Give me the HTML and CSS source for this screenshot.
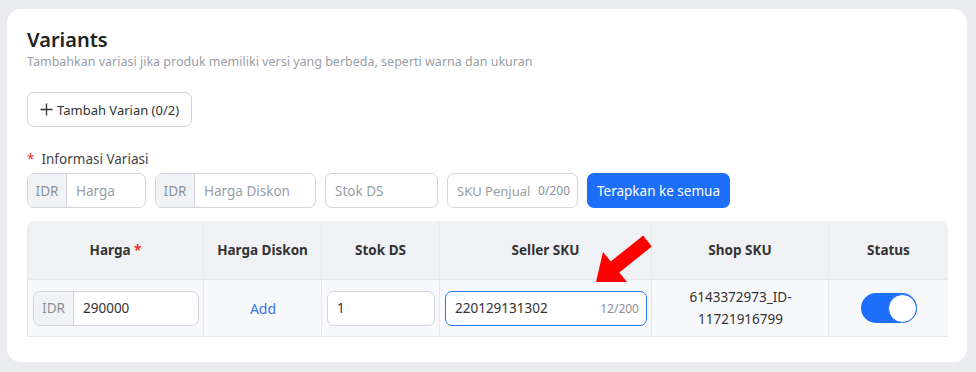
FILE: index.html
```html
<!DOCTYPE html>
<html lang="en">
<head>
  <meta charset="UTF-8" />
  <meta name="viewport" content="width=device-width, initial-scale=1.0"/>
  <title>Variants</title>
  <link rel="stylesheet" href="styles.css">
</head>
<body>
  <div class="card">
    <h2>Variants</h2>
    <p class="sub">Tambahkan variasi jika produk memiliki versi yang berbeda, seperti warna dan ukuran</p>

    <button class="btn-outline">
      <svg width="13" height="13" viewBox="0 0 13 13"><path d="M6.5 0.5v12M0.5 6.5h12" stroke="#333" stroke-width="1.3" fill="none"/></svg>
      Tambah Varian (0/2)
    </button>

    <div class="label"><span class="req">*</span>Informasi Variasi</div>

    <div class="bulk">
      <div class="field w-harga"><span class="addon">IDR</span><span class="ph">Harga</span></div>
      <div class="field w-diskon"><span class="addon">IDR</span><span class="ph">Harga Diskon</span></div>
      <div class="field w-stok"><span class="ph">Stok DS</span></div>
      <div class="field w-sku"><span class="ph">SKU Penjual</span><span class="count">0/200</span></div>
      <button class="btn-primary">Terapkan ke semua</button>
    </div>

    <div class="table-wrap">
      <table>
        <colgroup>
          <col style="width: 177px">
          <col style="width: 118px">
          <col style="width: 118px">
          <col style="width: 212px">
          <col style="width: 177px">
          <col style="width: 119px">
        </colgroup>
        <thead>
          <tr>
            <th>Harga <span class="req">*</span></th>
            <th>Harga Diskon</th>
            <th>Stok DS</th>
            <th>Seller SKU</th>
            <th>Shop SKU</th>
            <th>Status</th>
          </tr>
        </thead>
        <tbody>
          <tr>
            <td><div class="field"><span class="addon">IDR</span><span class="val">290000</span></div></td>
            <td><a class="link">Add</a></td>
            <td><div class="field"><span class="val">1</span></div></td>
            <td><div class="field active"><span class="val">220129131302</span><span class="count">12/200</span></div></td>
            <td class="shop">6143372973_ID-<br>11721916799</td>
            <td><div class="toggle"><div class="knob"></div></div></td>
          </tr>
        </tbody>
      </table>

      <svg class="arrow" width="60" height="55" viewBox="0 0 60 55">
        <polygon points="2,50 33,50 25.3,40.5 57.8,14.5 49.2,3.5 16.7,29.5 9,20" fill="#ff0000"/>
      </svg>
    </div>
  </div>
</body>
</html>
```

FILE: styles.css
```css
body {
  margin: 0;
  padding: 9px 9px 10px 7px;
  background-color: #ebecf0;
  font-family: "Noto Sans", "Open Sans", sans-serif;
  color: #333;
}
.card {
  box-sizing: border-box;
  width: 960px;
  height: 353px;
  background: #fff;
  border-radius: 14px;
  padding: 18px 19px 0 20px;
}
h2 {
  margin: 0;
  font-size: 20px;
  line-height: 26px;
  font-weight: 600;
  color: #222;
}
.sub {
  margin: 0;
  font-size: 12.5px;
  line-height: 18px;
  color: #9a9ea6;
}
.btn-outline {
  margin-top: 21px;
  height: 35px;
  padding: 0 12px;
  display: flex;
  align-items: center;
  gap: 4px;
  background: #fff;
  border: 1px solid #cfd1d6;
  border-radius: 7px;
  font-family: inherit;
  font-size: 13px;
  color: #333;
}
.label {
  margin-top: 22px;
  font-size: 13.5px;
  line-height: 20px;
  color: #444;
}
.req {
  color: #f0312a;
  margin-right: 7px;
}
th .req {
  margin-right: 0;
}
.bulk {
  margin-top: 4px;
  display: flex;
  gap: 9px;
}
.field {
  box-sizing: border-box;
  height: 35px;
  display: flex;
  align-items: center;
  border: 1px solid #d3d5da;
  border-radius: 7px;
  font-size: 13.5px;
  background: #fff;
  overflow: hidden;
}
.addon {
  align-self: stretch;
  display: flex;
  align-items: center;
  width: 38px;
  justify-content: center;
  background: #f1f2f5;
  border-right: 1px solid #d3d5da;
  color: #8c9099;
}
.ph {
  padding-left: 9px;
  color: #9a9ea6;
}
.val {
  padding-left: 9px;
  color: #333;
}
.count {
  margin-left: auto;
  padding-right: 7px;
  font-size: 12px;
  color: #8c9099;
}
.w-harga { width: 119px; }
.w-diskon { width: 161px; }
.w-stok { width: 113px; }
.w-sku { width: 131px; }
.w-sku .ph { font-size: 13px; }
.btn-primary {
  height: 35px;
  width: 143px;
  border: 0;
  border-radius: 7px;
  background: #1c6efb;
  color: #fff;
  font-family: inherit;
  font-size: 13.5px;
}
.table-wrap {
  position: relative;
  margin-top: 13px;
  width: 921px;
}
table {
  width: 921px;
  table-layout: fixed;
  border-collapse: separate;
  border-spacing: 0;
  font-size: 13.5px;
}
th {
  height: 56px;
  background: #f0f1f5;
  font-weight: 700;
  color: #333;
  border-right: 1px solid #e7e8ec;
  border-bottom: 1px solid #e7e8ec;
}
th:first-child {
  border-top-left-radius: 8px;
  border-left: 1px solid #e7e8ec;
}
th:last-child {
  border-top-right-radius: 8px;
  border-right: 0;
}
td {
  height: 56px;
  padding: 0 4px 0 5px;
  background: #f8f9fc;
  text-align: center;
  border-right: 1px solid #e7e8ec;
  border-bottom: 1px solid #e7e8ec;
}
td:first-child {
  border-left: 1px solid #e7e8ec;
}
td:last-child {
  border-right: 0;
}
td .field {
  text-align: left;
}
td .addon {
  width: 39px;
}
.active {
  border-color: #2a74f5;
}
.link {
  color: #3d73f2;
  font-size: 14px;
}
.shop {
  line-height: 22px;
  color: #333;
  font-size: 13.5px;
}
.toggle {
  margin: 0 auto 0 27px;
  width: 56px;
  height: 30px;
  border-radius: 15px;
  background: #1c6efb;
  display: flex;
  justify-content: flex-end;
  align-items: center;
}
.knob {
  box-sizing: border-box;
  width: 29px;
  height: 29px;
  border-radius: 50%;
  background: #fff;
  border: 1px solid #1c6efb;
}
.arrow {
  position: absolute;
  left: 567px;
  top: 11px;
}
```
